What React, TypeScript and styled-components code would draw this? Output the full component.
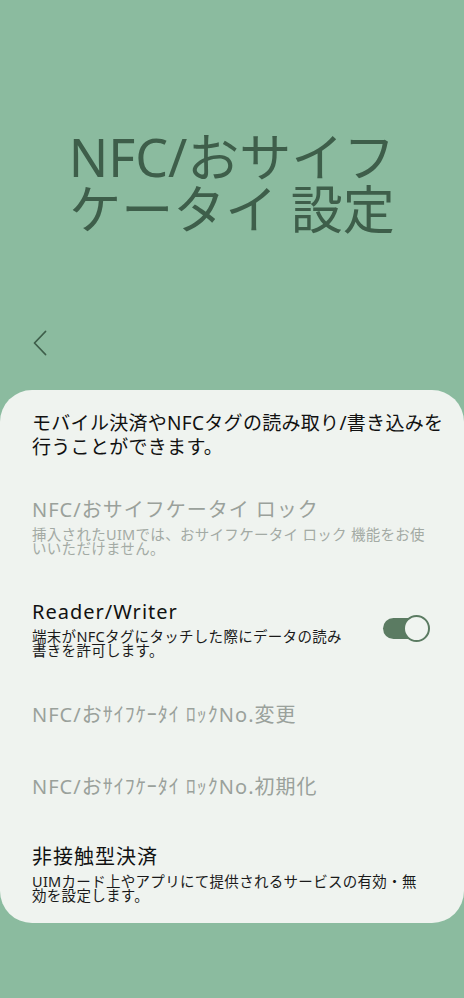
import React from "react";
import styled, { createGlobalStyle } from "styled-components";

const GlobalStyle = createGlobalStyle`
  html, body { margin: 0; padding: 0; background: #8bbb9f; }
  body { font-family: "Noto Sans", "Noto Sans CJK JP", sans-serif; }
  * { box-sizing: border-box; }
`;

const Page = styled.div`
  width: 464px;
  min-height: 998px;
  background: #8bbb9f;
  display: flex;
  flex-direction: column;
`;

const Header = styled.header`
  height: 390px;
  display: flex;
  flex-direction: column;
`;

const Title = styled.h1`
  margin: 0;
  padding-top: 131px;
  font-family: "Noto Sans", "Noto Sans CJK JP", sans-serif;
  font-weight: 400;
  font-size: 52px;
  line-height: 52px;
  color: #3e5e4a;
  text-align: center;
`;

const NavBar = styled.div`
  margin-top: 93px;
  height: 30px;
  padding-left: 30px;
  display: flex;
  align-items: center;
`;

const BackButton = styled.button`
  border: none;
  background: none;
  padding: 0;
  width: 20px;
  height: 30px;
  display: flex;
  align-items: center;
  justify-content: center;
`;

const Card = styled.section`
  background: #eff3ef;
  border-radius: 32px;
  padding: 21px 20px 0 32px;
  display: flex;
  flex-direction: column;
`;

const Intro = styled.p`
  margin: 0 0 16px;
  font-size: 19px;
  letter-spacing: 0.3px;
  line-height: 24px;
  color: #111;
`;

const Row = styled.div<{ $single?: boolean }>`
  padding: ${(p) => (p.$single ? "23px 0" : "22px 0")};
  display: flex;
  align-items: center;
  gap: 16px;
  &:last-child {
    padding-top: 21px;
    padding-bottom: 21px;
  }
`;

const RowText = styled.div`
  flex: 1;
  display: flex;
  flex-direction: column;
  gap: 4px;
`;

const RowTitle = styled.div<{ $disabled?: boolean }>`
  font-size: 20px;
  letter-spacing: 1px;
  line-height: 26px;
  color: ${(p) => (p.$disabled ? "#9aa19b" : "#111")};
`;

const RowSub = styled.div<{ $disabled?: boolean }>`
  font-size: 14.5px;
  letter-spacing: 0.3px;
  line-height: 14px;
  max-width: 398px;
  color: ${(p) => (p.$disabled ? "#a3aaa4" : "#1a1a1a")};
`;

const Toggle = styled.div`
  position: relative;
  width: 47px;
  height: 27px;
  margin-right: 14px;
  flex: none;
`;

const Track = styled.div`
  position: absolute;
  left: 0;
  top: 3px;
  width: 44px;
  height: 21px;
  border-radius: 11px;
  background: #5b7b62;
`;

const Thumb = styled.div`
  position: absolute;
  right: 0;
  top: 0;
  width: 27px;
  height: 27px;
  border-radius: 50%;
  background: #f0f4f0;
  border: 2px solid #5b7b62;
`;

const Spacer = styled.div`
  flex: 1;
`;

export default function App() {
  return (
    <Page>
      <GlobalStyle />
      <Header>
        <Title>
          NFC/おサイフ
          <br />
          ケータイ 設定
        </Title>
        <NavBar>
          <BackButton aria-label="戻る">
            <svg width="14" height="26" viewBox="0 0 14 26">
              <path d="M12.5 1.5 L1.5 13 L12.5 24.5" fill="none" stroke="#3e5e4a" strokeWidth="1.8" strokeLinecap="round" strokeLinejoin="round" />
            </svg>
          </BackButton>
        </NavBar>
      </Header>
      <Card>
        <Intro>モバイル決済やNFCタグの読み取り/書き込みを行うことができます。</Intro>
        <Row>
          <RowText>
            <RowTitle $disabled>NFC/おサイフケータイ ロック</RowTitle>
            <RowSub $disabled>挿入されたUIMでは、おサイフケータイ ロック 機能をお使いいただけません。</RowSub>
          </RowText>
        </Row>
        <Row>
          <RowText>
            <RowTitle>Reader/Writer</RowTitle>
            <RowSub>端末がNFCタグにタッチした際にデータの読み<br />書きを許可します。</RowSub>
          </RowText>
          <Toggle role="switch" aria-checked="true">
            <Track />
            <Thumb />
          </Toggle>
        </Row>
        <Row $single>
          <RowText>
            <RowTitle $disabled>NFC/おｻｲﾌｹｰﾀｲ ﾛｯｸNo.変更</RowTitle>
          </RowText>
        </Row>
        <Row $single>
          <RowText>
            <RowTitle $disabled>NFC/おｻｲﾌｹｰﾀｲ ﾛｯｸNo.初期化</RowTitle>
          </RowText>
        </Row>
        <Row>
          <RowText>
            <RowTitle>非接触型決済</RowTitle>
            <RowSub>UIMカード上やアプリにて提供されるサービスの有効・無効を設定します。</RowSub>
          </RowText>
        </Row>
      </Card>
      <Spacer />
    </Page>
  );
}
